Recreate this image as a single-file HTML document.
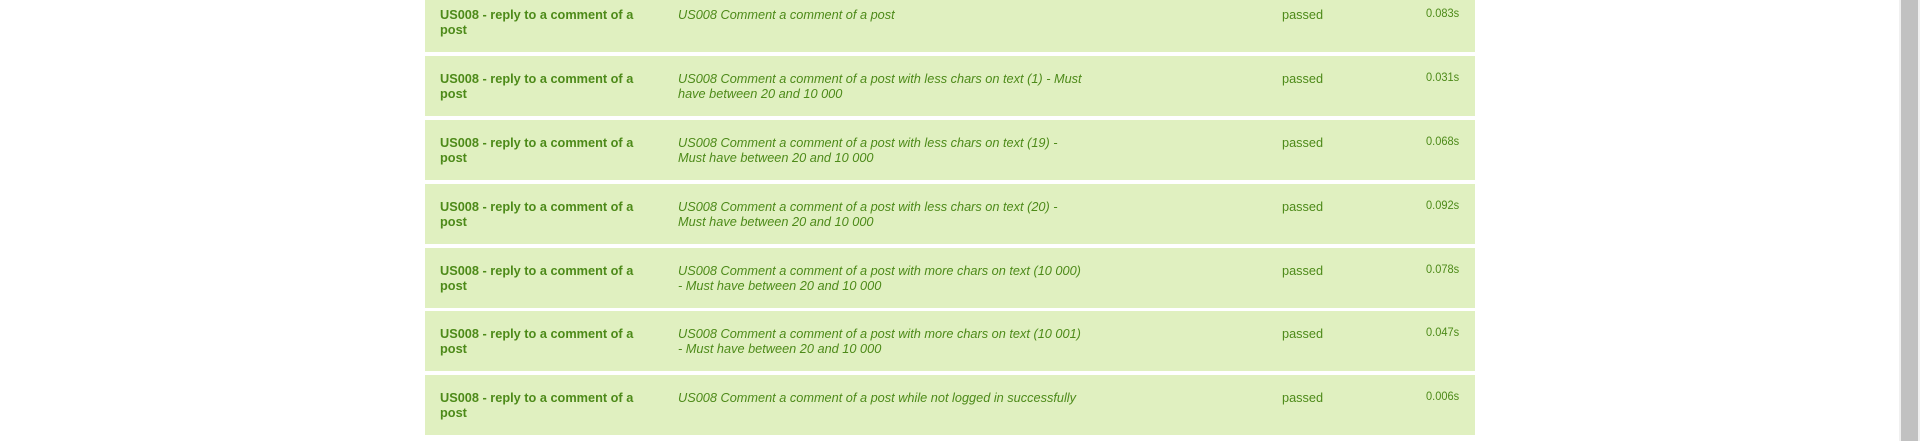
<!DOCTYPE html>
<html><head><style>
html,body{margin:0;padding:0;background:#fff;width:1920px;height:441px;overflow:hidden;font-family:"Liberation Sans",Arial,sans-serif;}
.row{position:absolute;left:425px;width:1050px;height:60px;background:#e0f0c0;color:#4d8a19;}
.c{position:absolute;white-space:nowrap;font-size:13px;line-height:15px;transform-origin:0 0;transform:scaleX(0.98);}
.n{left:15px;top:15px;font-weight:bold;}
.d{left:253px;top:15px;font-style:italic;}
.s{left:857px;top:15px;}
.t{left:1001px;top:14px;font-size:12px;transform:scaleX(0.92);}
.sb{position:absolute;left:1899px;top:0;width:21px;height:441px;background:#f0f0f0;}
.th{position:absolute;left:1901px;top:0;width:17px;height:441px;background:#c1c1c1;}
</style></head><body>
<div class="row" style="top:-8px"><div class="c n">US008 - reply to a comment of a<br>post</div><div class="c d">US008 Comment a comment of a post</div><div class="c s">passed</div><div class="c t">0.083s</div></div>
<div class="row" style="top:56px"><div class="c n">US008 - reply to a comment of a<br>post</div><div class="c d">US008 Comment a comment of a post with less chars on text (1) - Must<br>have between 20 and 10 000</div><div class="c s">passed</div><div class="c t">0.031s</div></div>
<div class="row" style="top:120px"><div class="c n">US008 - reply to a comment of a<br>post</div><div class="c d">US008 Comment a comment of a post with less chars on text (19) -<br>Must have between 20 and 10 000</div><div class="c s">passed</div><div class="c t">0.068s</div></div>
<div class="row" style="top:184px"><div class="c n">US008 - reply to a comment of a<br>post</div><div class="c d">US008 Comment a comment of a post with less chars on text (20) -<br>Must have between 20 and 10 000</div><div class="c s">passed</div><div class="c t">0.092s</div></div>
<div class="row" style="top:248px"><div class="c n">US008 - reply to a comment of a<br>post</div><div class="c d">US008 Comment a comment of a post with more chars on text (10 000)<br>- Must have between 20 and 10 000</div><div class="c s">passed</div><div class="c t">0.078s</div></div>
<div class="row" style="top:311px"><div class="c n">US008 - reply to a comment of a<br>post</div><div class="c d">US008 Comment a comment of a post with more chars on text (10 001)<br>- Must have between 20 and 10 000</div><div class="c s">passed</div><div class="c t">0.047s</div></div>
<div class="row" style="top:375px"><div class="c n">US008 - reply to a comment of a<br>post</div><div class="c d">US008 Comment a comment of a post while not logged in successfully</div><div class="c s">passed</div><div class="c t">0.006s</div></div>
<div class="sb"></div><div class="th"></div>
</body></html>
